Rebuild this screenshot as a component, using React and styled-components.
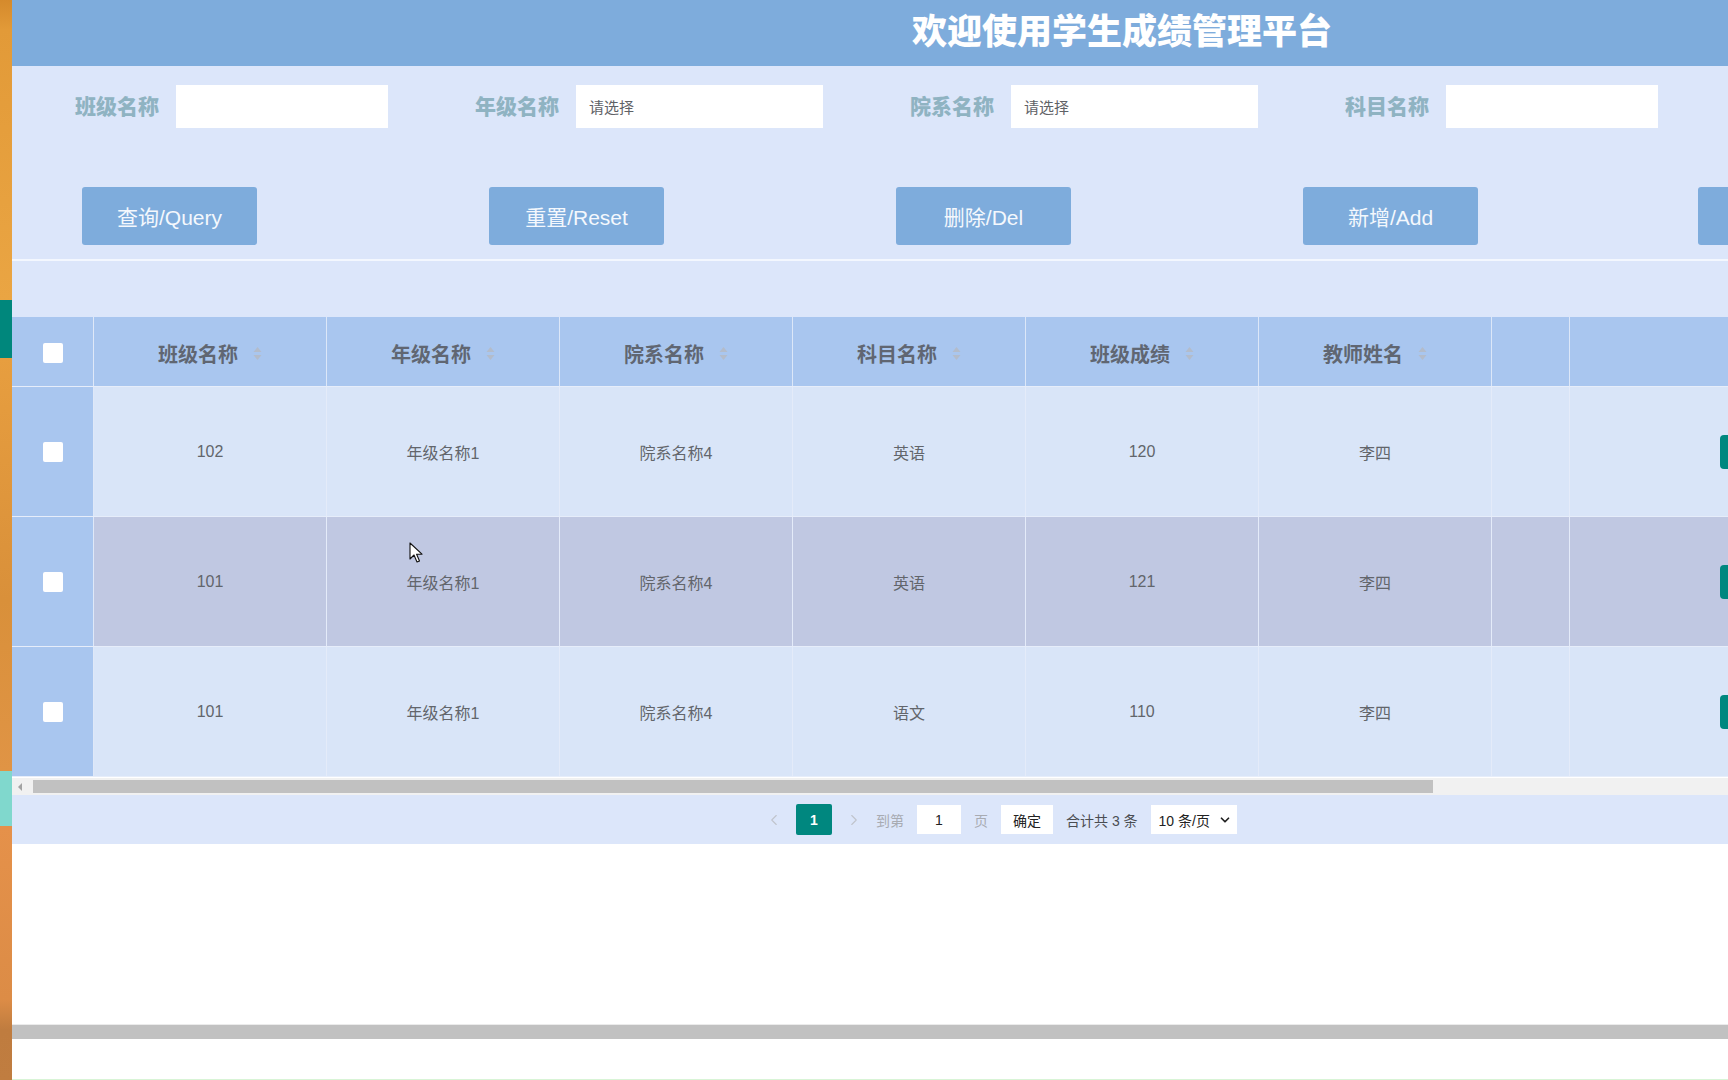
import { createGlobalStyle } from 'styled-components'
import styled from 'styled-components'
import { ChevronLeft, ChevronRight, ChevronDown } from 'lucide-react'

const GlobalStyle = createGlobalStyle`
  html, body {
    margin: 0;
    padding: 0;
    background: #ffffff;
    overflow: hidden;
  }
  body {
    font-family: "Liberation Sans", "Noto Sans CJK SC", sans-serif;
  }
  * { box-sizing: border-box; }
`

const Page = styled.div`
  position: relative;
  display: flex;
  width: 1728px;
  height: 1080px;
  overflow: hidden;
`

const SideStrip = styled.div`
  flex: 0 0 12px;
  background: linear-gradient(
    to bottom,
    #d58a2c 0px, #e29a38 30px, #eaa543 300px,
    #00877c 300px, #00877c 358px,
    #e79e3f 358px, #d9903a 600px, #e09445 771px,
    #80d8cd 771px, #80d8cd 826px,
    #e5914a 826px, #dc8c46 1000px, #bf7c3f 1030px, #c07d40 1080px
  );
`

const Main = styled.div`
  flex: 1;
  min-width: 0;
  display: flex;
  flex-direction: column;
  overflow: hidden;
  background: #ffffff;
`

const Header = styled.header`
  flex: 0 0 66px;
  display: flex;
  align-items: center;
  padding: 0 0 10px 900px;
  background: #7eacdc;
`

const Title = styled.h1`
  margin: 0;
  font-family: "Noto Sans CJK SC", sans-serif;
  font-size: 35px;
  font-weight: 900;
  color: #ffffff;
  white-space: nowrap;
  line-height: 1;
`

const SearchPanel = styled.section`
  flex: 0 0 251px;
  background: #dce6fa;
  display: flex;
  flex-direction: column;
`

const Filters = styled.div`
  display: flex;
  gap: 87px;
  padding: 19px 0 0 63px;
`

const Field = styled.label`
  display: flex;
  align-items: center;
  gap: 17px;
`

const FieldLabel = styled.span`
  font-family: "Noto Sans CJK SC", sans-serif;
  font-size: 21px;
  font-weight: 900;
  line-height: 1;
  padding-bottom: 3px;
  color: #8fb3c2;
  white-space: nowrap;
`

const FieldBox = styled.div`
  width: ${p => p.$w}px;
  height: 43px;
  background: #ffffff;
  display: flex;
  align-items: center;
  padding-left: 13px;
  font-family: "Noto Sans CJK SC", sans-serif;
  font-size: 15px;
  color: #5f6266;
`

const Actions = styled.div`
  display: flex;
  gap: 232px;
  margin-top: 59px;
  padding-left: 70px;
`

const ActionButton = styled.button`
  flex: 0 0 175px;
  height: 58px;
  margin-left: ${p => p.$pull ? '-12px' : '0'};
  border: none;
  border-radius: 3px;
  background: #7eacdc;
  color: #f4f8fd;
  font-family: "Liberation Sans", "Noto Sans CJK SC", sans-serif;
  font-size: 21px;
  cursor: pointer;
`

const Divider = styled.div`
  margin-top: 14px;
  height: 2px;
  background: #f3f7fe;
`

const Table = styled.div`
  flex: 0 0 460px;
  display: flex;
  flex-direction: column;
  background: #d9e5f8;
`

const Row = styled.div`
  display: grid;
  grid-template-columns: 82px repeat(6, 233px) 78px 260px;
  height: ${p => p.$h}px;
  background: ${p => p.$bg};
  border-bottom: 1px solid #e6edfa;
`

const HeadCell = styled.div`
  display: flex;
  align-items: center;
  justify-content: center;
  gap: 15px;
  padding-top: 3px;
  border-right: 1px solid #dce7f8;
  font-family: "Noto Sans CJK SC", sans-serif;
  font-size: 20px;
  font-weight: 700;
  color: #606672;
`

const Cell = styled.div`
  display: flex;
  align-items: center;
  justify-content: center;
  border-right: 1px solid #e4ebf9;
  font-family: "Liberation Sans", "Noto Sans CJK SC", sans-serif;
  font-size: 16px;
  color: #62656b;
`

const CheckCell = styled.div`
  display: flex;
  align-items: center;
  justify-content: center;
  padding-top: ${p => p.$head ? '3px' : '0'};
  background: #a9c6ef;
  border-right: 1px solid #dfe8f8;
`

const CheckBox = styled.span`
  width: 20px;
  height: 20px;
  border-radius: 2px;
  background: #ffffff;
`

const ActionCell = styled.div`
  display: flex;
  align-items: center;
  padding-left: 150px;
`

const RowButton = styled.span`
  width: 80px;
  height: 34px;
  border-radius: 4px;
  background: #00877f;
`

const ScrollTrack = styled.div`
  flex: 0 0 17px;
  margin-top: 1px;
  display: flex;
  align-items: center;
  background: #f1f1f1;
`

const ScrollArrow = styled.span`
  width: 0;
  height: 0;
  margin-left: 6px;
  border-top: 4px solid transparent;
  border-bottom: 4px solid transparent;
  border-right: 4px solid #a3a3a3;
`

const ScrollThumb = styled.span`
  width: 1400px;
  height: 13px;
  margin-left: 11px;
  background: #c1c1c1;
`

const Pager = styled.nav`
  flex: 0 0 49px;
  display: flex;
  align-items: center;
  gap: 13px;
  padding-left: 753px;
  background: #dce6fa;
  font-family: "Liberation Sans", "Noto Sans CJK SC", sans-serif;
  font-size: 14px;
  color: #606266;
`

const PageNo = styled.span`
  width: 36px;
  height: 31px;
  border-radius: 2px;
  background: #00877f;
  color: #ffffff;
  font-weight: 700;
  display: flex;
  align-items: center;
  justify-content: center;
`

const PagerText = styled.span`
  color: ${p => p.$muted ? '#a8abb2' : '#4a4d52'};
  white-space: nowrap;
`

const PagerBox = styled.span`
  width: ${p => p.$w}px;
  height: 29px;
  background: #ffffff;
  display: flex;
  align-items: center;
  justify-content: ${p => p.$left ? 'flex-start' : 'center'};
  gap: 8px;
  padding-left: ${p => p.$left ? '8px' : '0'};
  color: #222;
  white-space: nowrap;
`

const Blank = styled.div`
  flex: 1;
  background: #ffffff;
`

const BottomBar = styled.div`
  flex: 0 0 15px;
  background: #c1c1c1;
  border-top: 1px solid #ebebeb;
`

const BottomGap = styled.div`
  flex: 0 0 41px;
  background: #ffffff;
  border-bottom: 1px solid #d8f4d6;
`

const Cursor = styled.svg`
  position: absolute;
  left: 409px;
  top: 542px;
  pointer-events: none;
`

const SortIcon = () => (
  <svg width="9" height="15" viewBox="0 0 9 15">
    <path d="M4.5 1 L8.5 6 H0.5 Z" fill="#b3bccb" />
    <path d="M4.5 14 L8.5 9 H0.5 Z" fill="#b3bccb" />
  </svg>
)

const filters = [
  { label: '班级名称', w: 212, text: '' },
  { label: '年级名称', w: 247, text: '请选择' },
  { label: '院系名称', w: 247, text: '请选择' },
  { label: '科目名称', w: 212, text: '' },
]

const buttons = ['查询/Query', '重置/Reset', '删除/Del', '新增/Add']

const columns = ['班级名称', '年级名称', '院系名称', '科目名称', '班级成绩', '教师姓名']

const rows = [
  ['102', '年级名称1', '院系名称4', '英语', '120', '李四'],
  ['101', '年级名称1', '院系名称4', '英语', '121', '李四'],
  ['101', '年级名称1', '院系名称4', '语文', '110', '李四'],
]

export default function App() {
  return (
    <Page>
      <GlobalStyle />
      <SideStrip />
      <Main>
        <Header>
          <Title>欢迎使用学生成绩管理平台</Title>
        </Header>

        <SearchPanel>
          <Filters>
            {filters.map(f => (
              <Field key={f.label}>
                <FieldLabel>{f.label}</FieldLabel>
                <FieldBox $w={f.w}>{f.text}</FieldBox>
              </Field>
            ))}
          </Filters>
          <Actions>
            {buttons.map(b => <ActionButton key={b}>{b}</ActionButton>)}
            <ActionButton $pull aria-label="导出" />
          </Actions>
          <Divider />
        </SearchPanel>

        <Table>
          <Row $h={70} $bg="#a9c6ef">
            <CheckCell $head><CheckBox /></CheckCell>
            {columns.map(c => (
              <HeadCell key={c}>{c}<SortIcon /></HeadCell>
            ))}
            <HeadCell />
            <HeadCell />
          </Row>
          {rows.map((r, i) => (
            <Row key={i} $h={130} $bg={i === 1 ? '#c0c8e2' : '#d9e5f8'}>
              <CheckCell><CheckBox /></CheckCell>
              {r.map((v, j) => <Cell key={j}>{v}</Cell>)}
              <Cell />
              <ActionCell><RowButton /></ActionCell>
            </Row>
          ))}
        </Table>

        <ScrollTrack>
          <ScrollArrow />
          <ScrollThumb />
        </ScrollTrack>

        <Pager>
          <ChevronLeft size={18} color="#c0c4cc" strokeWidth={1.5} />
          <PageNo>1</PageNo>
          <ChevronRight size={18} color="#c0c4cc" strokeWidth={1.5} />
          <PagerText $muted>到第</PagerText>
          <PagerBox $w={44}>1</PagerBox>
          <PagerText $muted>页</PagerText>
          <PagerBox $w={52}>确定</PagerBox>
          <PagerText>合计共 3 条</PagerText>
          <PagerBox $w={86} $left>10 条/页<ChevronDown size={14} strokeWidth={3} color="#222" /></PagerBox>
        </Pager>

        <Blank />
        <BottomBar />
        <BottomGap />
      </Main>

      <Cursor width="14" height="22" viewBox="0 0 14 22">
        <path d="M1 1 L1 17 L5 13 L8 20 L10.5 19 L7.6 12.2 L13 12.2 Z" fill="#ffffff" stroke="#111" strokeWidth="1.1" strokeLinejoin="round" />
      </Cursor>
    </Page>
  )
}
